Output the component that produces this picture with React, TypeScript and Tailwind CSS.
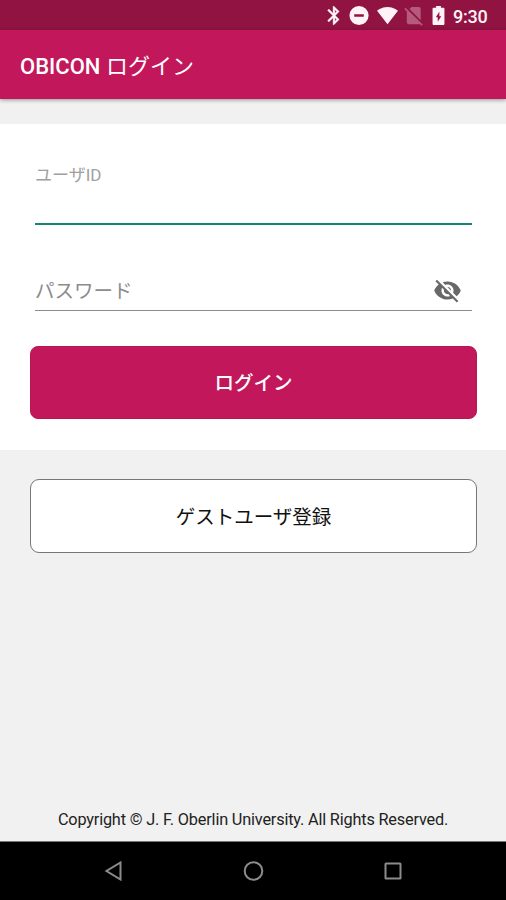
const sans = "font-['Roboto','Noto_Sans_CJK_JP',sans-serif]";

function StatusBar() {
  return (
    <header className="flex h-[30px] shrink-0 items-start bg-[#911342] pt-[4px] pl-[323px] text-[#fff3f7]">
      <svg className="h-[23px] w-[22px] shrink-0" viewBox="0 0 24 24" fill="currentColor">
        <path d="M17.71 7.71 12 2h-1v7.59L6.41 5 5 6.41 10.59 12 5 17.59 6.41 19 11 14.41V22h1l5.71-5.71-4.3-4.29 4.3-4.29zM13 5.83l1.88 1.88L13 9.59V5.83zm1.88 10.46L13 18.17v-3.76l1.88 1.88z" stroke="currentColor" strokeWidth=".4" />
      </svg>
      <svg className="ml-[3px] h-[23px] w-[23px] shrink-0" viewBox="0 0 24 24" fill="currentColor">
        <path fillRule="evenodd" d="M11.500 2a10 10 0 1 0 0 20 10 10 0 0 0 0-20zM6.500 10.7h10v2.6h-10z" />
      </svg>
      <svg className="ml-[5px] h-[23px] w-[23px] shrink-0" viewBox="0 0 24 24" fill="currentColor">
        <path d="M12.01 21.200 22.900 7c-.45-.34-4.500-4-10.900-4C5.600 3 1.500 6.660 1.100 7l10.900 14.190.01.01z" />
      </svg>
      <svg className="ml-[3px] h-[23px] w-[23px] shrink-0 text-[#b5597d]" viewBox="0 0 24 24" fill="currentColor">
        <path d="M19.5 5c0-1.1-.9-2-2-2H10L7.8 5.2l11.7 11.7zM3.65 3.88 2.4 5.15 5 7.75V19c0 1.1.9 2 2 2h10.5c.35 0 .68-.1.97-.26l1.88 1.88 1.27-1.27z" />
      </svg>
      <svg className="ml-[2px] h-[23px] w-[23px] shrink-0" viewBox="0 0 24 24" fill="currentColor">
        <path fillRule="evenodd" d="M17 4h-2.500V2h-5v2H7c-.7 0-1.200.6-1.200 1.300v15.400c0 .7.5 1.300 1.200 1.300h10c.7 0 1.200-.6 1.200-1.300V5.300C18.200 4.600 17.700 4 17 4zM11.200 18.500v-4.700H9.200L12.900 8v4.700h2z" />
      </svg>
      <span className="ml-[3px] text-[18px] leading-[25px] tracking-[-0.2px] font-medium whitespace-nowrap">9:30</span>
    </header>
  );
}

function NavigationBar() {
  return (
    <nav className="grid h-[59px] shrink-0 grid-cols-[183px_140px_183px] items-center border-t border-[#777] bg-black text-[#8c8c8c]">
      <svg className="ml-[103px] h-[22px] w-[20px]" viewBox="0 0 20 22" fill="none" stroke="currentColor" strokeWidth="2">
        <path d="M17.500 2.500v17L3.500 11z" />
      </svg>
      <svg className="ml-[60px] h-[22px] w-[22px]" viewBox="0 0 22 22" fill="none" stroke="currentColor" strokeWidth="2">
        <circle cx="10.500" cy="11" r="8.800" />
      </svg>
      <svg className="ml-[60px] h-[20px] w-[20px]" viewBox="0 0 20 20" fill="none" stroke="currentColor" strokeWidth="2">
        <rect x="2.500" y="2.500" width="15" height="15" rx=".5" />
      </svg>
    </nav>
  );
}

export default function App() {
  return (
    <div className={`flex h-[900px] w-[506px] flex-col overflow-hidden bg-[#f1f1f1] ${sans}`}>
      <StatusBar />
      <div className="flex h-[69px] shrink-0 items-center bg-[#c2185b] px-5 pt-[4px] text-white shadow-[0_1px_4px_rgba(0,0,0,0.4)]">
        <h1 className="flex items-center text-[22px] leading-[30px] font-medium whitespace-nowrap">
          <span className="w-[86px]">OBICON</span>
          <span className="font-normal">ログイン</span>
        </h1>
      </div>
      <main className="flex min-h-0 grow flex-col">
        <form className="mt-[25px] flex h-[326px] shrink-0 flex-col bg-white px-[30px]">
          <label className="mt-[39px] mr-[4px] ml-[5px] h-[62px] border-b-2 border-[#148578] text-[17px] leading-[24px] text-[#a0a0a0]">ユーザID</label>
          <div className="mr-[4px] ml-[5px] flex h-[86px] items-end justify-between border-b border-[#8c8c8c] pb-[5px]">
            <span className="text-[19.500px] leading-[27px] text-[#8c8c8c]">パスワード</span>
            <svg className="mr-[10px] h-[29px] w-[29px]" viewBox="0 0 24 24" fill="#686868">
              <path d="M12 7c2.760 0 5 2.240 5 5 0 .65-.13 1.260-.36 1.830l2.920 2.920c1.510-1.260 2.700-2.890 3.430-4.750-1.730-4.390-6-7.500-11-7.500-1.400 0-2.740.25-3.980.7l2.160 2.160C10.740 7.130 11.350 7 12 7zM2 4.270l2.280 2.280.46.46C3.080 8.300 1.780 10.020 1 12c1.730 4.390 6 7.500 11 7.500 1.550 0 3.030-.3 4.380-.84l.42.42L19.730 22 21 20.730 3.270 3 2 4.270zM7.530 9.800l1.550 1.550c-.05.21-.08.43-.08.65 0 1.660 1.340 3 3 3 .22 0 .44-.03.65-.08l1.550 1.550c-.67.33-1.410.53-2.200.53-2.760 0-5-2.240-5-5 0-.79.2-1.530.53-2.200zm4.310-.78 3.150 3.150.02-.16c0-1.660-1.340-3-3-3l-.17.01z" />
            </svg>
          </div>
          <button type="button" className="mt-[35px] h-[73px] w-[447px] rounded-[8px] border border-[#b81850] bg-[#c2185b] pt-[3px] text-[19.500px] font-medium text-white">ログイン</button>
        </form>
        <button type="button" className="mx-[30px] mt-[29px] h-[74px] w-[447px] shrink-0 rounded-[9px] border border-[#777] bg-white pt-[3px] text-[19.500px] text-[#111]">ゲストユーザ登録</button>
        <footer className="mt-auto pb-[9px] text-center text-[16.300px] leading-[24px] tracking-[-0.18px] whitespace-nowrap text-[#222]">Copyright © J. F. Oberlin University. All Rights Reserved.</footer>
      </main>
      <NavigationBar />
    </div>
  );
}
